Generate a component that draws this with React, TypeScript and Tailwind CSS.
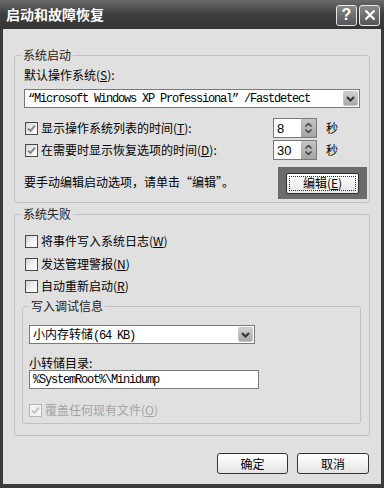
import React from "react";

const cjk = { fontFamily: '"Noto Sans CJK SC", "Noto Sans", sans-serif' };
const mono = { fontFamily: '"Liberation Mono", "Noto Sans CJK SC", monospace' };

function Check({ checked, disabled }: { checked?: boolean; disabled?: boolean }) {
  return (
    <span
      className={
        "w-[13px] h-[13px] shrink-0 border flex items-center justify-center bg-gradient-to-br " +
        (disabled
          ? "border-[#b5b5b5] from-[#f4f4f4] to-[#f4f4f4]"
          : "border-[#4a4a4a] from-[#d4d4d4] via-[#f0f0f0] to-[#ffffff]")
      }
    >
      {checked && (
        <svg width="9" height="9" viewBox="0 0 9 9">
          <path
            d="M1 4.5 L3.5 7 L8 1.5"
            fill="none"
            stroke={disabled ? "#c4c4c4" : "#8a8a8a"}
            strokeWidth="2"
          />
        </svg>
      )}
    </span>
  );
}

function DropArrow() {
  return (
    <span className="w-[15px] h-[15px] mr-[1px] rounded-[2px] bg-gradient-to-b from-[#d0d0d0] to-[#a8a8a8] border border-[#c8c8c8] flex items-center justify-center">
      <svg width="9" height="6" viewBox="0 0 9 6">
        <path d="M1 1 L4.5 4.5 L8 1" fill="none" stroke="#333" strokeWidth="2" />
      </svg>
    </span>
  );
}

function Spinner({ value }: { value: string }) {
  return (
    <div className="w-[44px] h-[20px] border border-[#7a7a7a] bg-white flex items-center justify-between">
      <span className="pl-[3px] text-[13px] leading-none" style={{ fontFamily: '"Liberation Sans", sans-serif' }}>
        {value}
      </span>
      <span className="w-[15px] h-[18px] bg-gradient-to-b from-[#c4c4c4] to-[#a4a4a4] flex flex-col items-center justify-center gap-[2px]">
        <svg width="7" height="4" viewBox="0 0 7 4">
          <path d="M0.5 3.5 L3.5 0.5 L6.5 3.5" fill="none" stroke="#444" strokeWidth="1.5" />
        </svg>
        <svg width="7" height="4" viewBox="0 0 7 4">
          <path d="M0.5 0.5 L3.5 3.5 L6.5 0.5" fill="none" stroke="#444" strokeWidth="1.5" />
        </svg>
      </span>
    </div>
  );
}

function Group({ title, className, children }: { title: string; className: string; children: React.ReactNode }) {
  return (
    <div className={"relative border border-[#c2c2c2] rounded-[3px] " + className}>
      <span className="absolute -top-[8px] left-[6px] px-[2px] bg-[#e0e0e0] text-[12px] leading-[14px] text-[#222]">
        {title}
      </span>
      {children}
    </div>
  );
}

export default function App() {
  return (
    <div className="w-[384px] h-[488px] bg-[#3b3b3b] flex flex-col text-black" style={cjk}>
      {/* title bar */}
      <div className="h-[29px] shrink-0 flex items-center justify-between pl-[6px] pr-[4px] bg-gradient-to-b from-[#6a6a6a] via-[#3e3e3e] to-[#353535]">
        <span className="text-white text-[14px] font-bold">启动和故障恢复</span>
        <div className="flex gap-[2px] mt-[1px]">
          <span className="w-[21px] h-[21px] rounded-[3px] border border-[#e6e6e6] bg-gradient-to-b from-[#8a8a8a] to-[#555] text-white text-[16px] font-bold flex items-center justify-center leading-none" style={{ fontFamily: '"Liberation Sans", sans-serif' }}>
            ?
          </span>
          <span className="w-[21px] h-[21px] rounded-[3px] border border-[#e6e6e6] bg-gradient-to-b from-[#8a8a8a] to-[#555] flex items-center justify-center">
            <svg width="12" height="12" viewBox="0 0 12 12">
              <path d="M1.5 1.5 L10.5 10.5 M10.5 1.5 L1.5 10.5" stroke="#fff" strokeWidth="2.2" />
            </svg>
          </span>
        </div>
      </div>

      {/* body */}
      <div className="flex-1 mx-[3px] mb-[4px] bg-[#e0e0e0] px-[11px] flex flex-col">
        <Group title="系统启动" className="mt-[26px] h-[148px] pl-[9px] pr-[9px]">
          <div className="mt-[12px] text-[12px] leading-[14px]">
            默认操作系统(<u>S</u>):
          </div>
          <div className="mt-[7px] h-[19px] border border-[#7a7a7a] bg-white flex items-center justify-between">
            <span className="pl-[3px] text-[12px] tracking-[-1.2px] leading-none" style={mono}>
              “Microsoft Windows XP Professional” /Fastdetect
            </span>
            <DropArrow />
          </div>
          <div className="mt-[10px] h-[20px] flex items-center text-[12px]">
            <span className="ml-[1px]"><Check checked /></span>
            <span className="ml-[3px] w-[232px]">显示操作系统列表的时间(<u>T</u>):</span>
            <Spinner value="8" />
            <span className="ml-[9px]">秒</span>
          </div>
          <div className="mt-[2px] h-[20px] flex items-center text-[12px]">
            <span className="ml-[1px]"><Check checked /></span>
            <span className="ml-[3px] w-[232px]">在需要时显示恢复选项的时间(<u>D</u>):</span>
            <Spinner value="30" />
            <span className="ml-[9px]">秒</span>
          </div>
          <div className="mt-[7px] h-[32px] flex items-center justify-between text-[12px]">
            <span className="-mt-[3px]">要手动编辑启动选项，请单击“编辑”。</span>
            <div className="w-[89px] h-[32px] -mr-[7px] bg-[#6b6b6b] flex items-center justify-center">
              <div className="w-[73px] h-[21px] rounded-[2px] border border-[#2e2e2e] bg-gradient-to-b from-[#ffffff] to-[#e6e6e6] p-[2px]">
                <div className="w-full h-full border border-dotted border-[#333] flex items-center justify-center text-[12px] leading-none">
                  编辑(<u>E</u>)
                </div>
              </div>
            </div>
          </div>
        </Group>

        <Group title="系统失败" className="mt-[11px] h-[222px]">
          <div className="mt-[19px] ml-[10px] h-[14px] flex items-center gap-[3px] text-[12px]">
            <Check />
            <span>将事件写入系统日志(<u>W</u>)</span>
          </div>
          <div className="mt-[9px] ml-[10px] h-[14px] flex items-center gap-[3px] text-[12px]">
            <Check />
            <span>发送管理警报(<u>N</u>)</span>
          </div>
          <div className="mt-[8px] ml-[10px] h-[14px] flex items-center gap-[3px] text-[12px]">
            <Check />
            <span>自动重新启动(<u>R</u>)</span>
          </div>
          <Group title="写入调试信息" className="mt-[13px] ml-[7px] mr-[8px] h-[118px] pl-[6px]">
            <div className="mt-[18px] w-[226px] h-[19px] border border-[#7a7a7a] bg-white flex items-center justify-between">
              <span className="pl-[3px] text-[12px] leading-none">
                小内存转储<span className="text-[12px] tracking-[-1.2px]" style={mono}>(64 KB)</span>
              </span>
              <DropArrow />
            </div>
            <div className="mt-[12px] text-[12px] leading-[14px]">小转储目录:</div>
            <div className="w-[230px] h-[19px] border border-[#7a7a7a] bg-white flex items-center">
              <span className="pl-[3px] text-[12px] tracking-[-1.2px] leading-none" style={mono}>
                %SystemRoot%\Minidump
              </span>
            </div>
            <div className="mt-[14px] h-[14px] flex items-center gap-[3px] text-[12px] text-[#a4a4a4]">
              <Check checked disabled />
              <span>覆盖任何现有文件(<u>O</u>)</span>
            </div>
          </Group>
        </Group>

        <div className="mt-[17px] mr-[1px] flex justify-end gap-[9px]">
          <button className="w-[71px] h-[21px] rounded-[3px] border border-[#333] bg-gradient-to-b from-[#ffffff] to-[#e4e4e4] text-[12px] leading-none">
            确定
          </button>
          <button className="w-[72px] h-[21px] rounded-[3px] border border-[#333] bg-gradient-to-b from-[#ffffff] to-[#e4e4e4] text-[12px] leading-none">
            取消
          </button>
        </div>
      </div>
    </div>
  );
}
